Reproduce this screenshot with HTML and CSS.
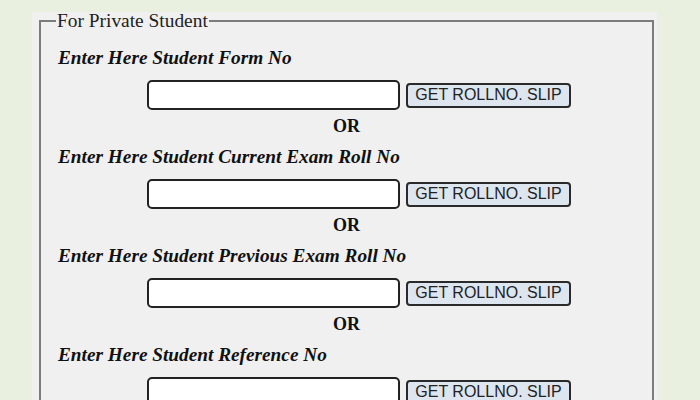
FILE: index.html
```html
<!DOCTYPE html>
<html>
<head>
<meta charset="utf-8">
<link rel="stylesheet" href="styles.css">
</head>
<body>
<div class="panel">
  <fieldset class="box">
    <legend class="legend">For Private Student</legend>
    <div class="block">
      <div class="label">Enter Here Student Form No</div>
      <div class="row"><input class="field" type="text"><button class="btn">GET ROLLNO. SLIP</button></div>
      <div class="or">OR</div>
    </div>
    <div class="block">
      <div class="label">Enter Here Student Current Exam Roll No</div>
      <div class="row"><input class="field" type="text"><button class="btn">GET ROLLNO. SLIP</button></div>
      <div class="or">OR</div>
    </div>
    <div class="block">
      <div class="label">Enter Here Student Previous Exam Roll No</div>
      <div class="row"><input class="field" type="text"><button class="btn">GET ROLLNO. SLIP</button></div>
      <div class="or">OR</div>
    </div>
    <div class="block">
      <div class="label">Enter Here Student Reference No</div>
      <div class="row"><input class="field" type="text"><button class="btn">GET ROLLNO. SLIP</button></div>
    </div>
  </fieldset>
</div>
</body>
</html>
```

FILE: styles.css
```css
html, body {
  margin: 0;
  padding: 0;
  background: #e9f0df;
  height: 400px;
  overflow: hidden;
}
.panel {
  margin: 12px 0 0 32px;
  width: 625px;
  height: 400px;
  background: #f0f0f0;
  padding: 0 0 0 7px;
  box-sizing: border-box;
}
.box {
  margin: 0;
  width: 615px;
  box-sizing: border-box;
  border: 2px solid #7c7c7c;
  padding: 1px 0 0 0;
  height: 400px;
  font-family: "Liberation Serif", "Times New Roman", serif;
  color: #111;
}
.legend {
  margin-left: 15px;
  padding: 0 1px;
  font-size: 19.4px;
  line-height: 18px;
  color: #222;
}
.block {
  display: flex;
  flex-direction: column;
}
.label {
  margin: 16px 0 0 17px;
  font-size: 19.3px;
  line-height: 22px;
  font-weight: bold;
  font-style: italic;
}
.row {
  display: flex;
  align-items: center;
  margin: 11px 0 0 106px;
  height: 30px;
}
.field {
  width: 253px;
  height: 30px;
  box-sizing: border-box;
  border: 2px solid #222;
  border-radius: 5px;
  background: #fff;
  margin: 0;
  padding: 0 4px;
}
.btn {
  margin: 0 0 0 6px;
  width: 165px;
  height: 25px;
  box-sizing: border-box;
  border: 2px solid #2a2a2a;
  border-radius: 4px;
  background: #dde5ef;
  font-family: "Liberation Sans", Arial, sans-serif;
  font-size: 16px;
  color: #222;
  padding: 0;
}
.or {
  margin-top: 6px;
  text-align: center;
  font-size: 18px;
  line-height: 20px;
  font-weight: bold;
  margin-bottom: -6px;
}
```
